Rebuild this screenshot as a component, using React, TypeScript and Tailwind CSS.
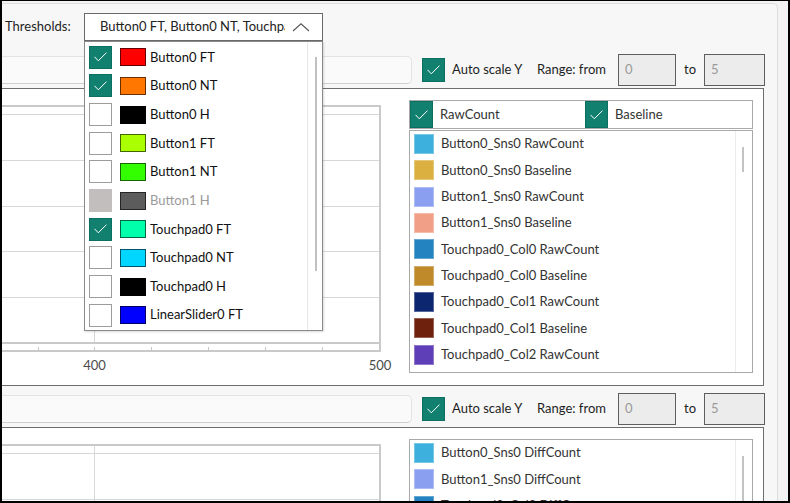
import React from 'react';

type Threshold = { label: string; color: string; checked?: boolean; disabled?: boolean };

const thresholds: Threshold[] = [
  { label: 'Button0 FT', color: '#ff0000', checked: true },
  { label: 'Button0 NT', color: '#ff7700', checked: true },
  { label: 'Button0 H', color: '#000000' },
  { label: 'Button1 FT', color: '#aaff00' },
  { label: 'Button1 NT', color: '#33ff00' },
  { label: 'Button1 H', color: '#5c5c5c', disabled: true },
  { label: 'Touchpad0 FT', color: '#00ffaa', checked: true },
  { label: 'Touchpad0 NT', color: '#00d6ff' },
  { label: 'Touchpad0 H', color: '#000000' },
  { label: 'LinearSlider0 FT', color: '#0000ff' },
];

const rawSeries = [
  { label: 'Button0_Sns0 RawCount', color: '#3db0dd' },
  { label: 'Button0_Sns0 Baseline', color: '#dcb040' },
  { label: 'Button1_Sns0 RawCount', color: '#8a9ff0' },
  { label: 'Button1_Sns0 Baseline', color: '#f29f88' },
  { label: 'Touchpad0_Col0 RawCount', color: '#2382c0' },
  { label: 'Touchpad0_Col0 Baseline', color: '#be8a2a' },
  { label: 'Touchpad0_Col1 RawCount', color: '#0d2670' },
  { label: 'Touchpad0_Col1 Baseline', color: '#6e220e' },
  { label: 'Touchpad0_Col2 RawCount', color: '#5e3fb8' },
];

const diffSeries = [
  { label: 'Button0_Sns0 DiffCount', color: '#3db0dd' },
  { label: 'Button1_Sns0 DiffCount', color: '#8a9ff0' },
  { label: 'Touchpad0_Col0 DiffCount', color: '#2382c0' },
  { label: 'Touchpad0_Col1 DiffCount', color: '#0d2670' },
  { label: 'Touchpad0_Col2 DiffCount', color: '#5e3fb8' },
];

function CheckBox({ checked, disabled, className = '' }: { checked?: boolean; disabled?: boolean; className?: string }) {
  if (disabled) return <span className={`block shrink-0 bg-[#c2bebe] ${className}`} />;
  if (!checked) return <span className={`block shrink-0 border border-[#9c9c9c] bg-white ${className}`} />;
  return (
    <span className={`flex shrink-0 items-center justify-center border border-[#0d6f61] bg-[#11806f] ${className}`}>
      <svg width="13" height="10" viewBox="0 0 13 10">
        <path d="M0.5 4.8 L4.3 8.8 L12.5 0.6" stroke="#ffffff" strokeWidth="1" fill="none" />
      </svg>
    </span>
  );
}

function Toolbar() {
  return (
    <div className="flex h-[32px] shrink-0 items-center pr-[12px]">
      <div className="-ml-[10px] h-[28px] flex-1 rounded-[5px] border border-[#e3e3e3] border-b-[#cfcfcf] bg-[#fafafa]" />
      <CheckBox checked className="ml-[10px] h-[24px] w-[23px]" />
      <span className="ml-[7px] w-[85px] shrink-0">Auto scale Y</span>
      <span className="w-[81px] shrink-0">Range: from</span>
      <div className="flex h-[32px] w-[58px] shrink-0 items-center border border-[#5e5e5e] bg-[#ececec] pl-[6px] text-[#9a9a9a]">0</div>
      <span className="w-[28px] shrink-0 pl-[8px]">to</span>
      <div className="flex h-[32px] w-[61px] shrink-0 items-center border border-[#5e5e5e] bg-[#ececec] pl-[6px] text-[#9a9a9a]">5</div>
    </div>
  );
}

// x in page pixels, y relative to the group's inner top
function Chart({ labels = true }: { labels?: boolean }) {
  const hGrid = [25.5, 71.5, 117.5, 162.5, 208.5];
  const ticks = [38.5, 94.5, 151.5, 208.5, 265.5, 322.5];
  return (
    <svg width="400" height="296" viewBox="-6 0 400 296" className="block shrink-0">
      {hGrid.map((y) => (
        <line key={y} x1={-6} x2={379} y1={y} y2={y} stroke="#d8d8d8" />
      ))}
      <line x1={94.5} x2={94.5} y1={18} y2={253} stroke="#d8d8d8" />
      <rect x={-6} y={16} width={387} height={2} fill="#c9c9c9" />
      <rect x={379} y={16} width={2} height={247} fill="#c9c9c9" />
      <rect x={-6} y={253} width={387} height={2} fill="#c9c9c9" />
      <rect x={-6} y={261} width={387} height={2} fill="#c9c9c9" />
      {ticks.map((x) => (
        <line key={x} x1={x} x2={x} y1={258} y2={261} stroke="#c4c4c4" />
      ))}
      {labels && (
        <>
          <text x={94.5} y={281} textAnchor="middle" fontSize="13" fill="#4a4a4a" fontFamily="Lato, sans-serif">400</text>
          <text x={380} y={281} textAnchor="middle" fontSize="13" fill="#4a4a4a" fontFamily="Lato, sans-serif">500</text>
        </>
      )}
    </svg>
  );
}

function SeriesList({ items, height, thumb }: { items: { label: string; color: string }[]; height: string; thumb: string }) {
  return (
    <div className={`flex border border-[#a9a9a9] bg-white ${height}`}>
      <div className="flex-1 overflow-hidden">
        {items.map((s) => (
          <div key={s.label} className="flex h-[26.33px] items-center pl-[4px] text-[#333333]">
            <span className="block h-[20px] w-[20px] shrink-0 ring-1 ring-inset ring-white/30" style={{ backgroundColor: s.color }} />
            <span className="ml-[7px] whitespace-nowrap">{s.label}</span>
          </div>
        ))}
      </div>
      <div className="w-[17px] shrink-0 border-l border-[#ececec]">
        <div className={`ml-[6px] mt-[16px] w-[2px] bg-[#c3c3c3] ${thumb}`} />
      </div>
    </div>
  );
}

function App() {
  return (
    <div className="relative flex h-[503px] w-[790px] overflow-hidden border-b-2 border-l-2 border-r-2 border-t border-black bg-[#f3f3f3] font-['Lato',sans-serif] text-[13px] text-[#1e1e1e]">
      <div className="mt-[2px] flex w-[776px] shrink-0 flex-col rounded-tr-[5px] border-r border-t border-[#dedede] bg-[#f7f7f7]">
        {/* Thresholds header */}
        <div className="flex h-[50px] shrink-0 items-start pl-[3px] pt-[9px]">
          <span className="flex h-[28px] w-[79px] shrink-0 items-center">Thresholds:</span>
          <div className="relative z-20">
            <div className="flex h-[28px] w-[239px] items-center border border-[#6a6a6a] bg-white pl-[15px]">
              <span className="w-[185px] overflow-hidden whitespace-nowrap text-[#222222]">Button0 FT, Button0 NT, Touchpad0 FT</span>
              <svg width="18" height="9" viewBox="0 0 18 9" className="ml-[7px]">
                <path d="M1 8 L9 0.8 L17 8" stroke="#555555" strokeWidth="1.1" fill="none" />
              </svg>
            </div>
            {/* open dropdown list */}
            <div className="absolute left-0 top-full flex h-[290px] w-[239px] border border-[#8a8a8a] bg-white shadow-[1px_1px_2px_rgba(0,0,0,0.15)]">
              <div className="flex-1 pt-[1px]">
                {thresholds.map((t) => (
                  <div key={t.label} className="flex h-[28.67px] items-center pl-[4px]">
                    <CheckBox checked={t.checked} disabled={t.disabled} className="h-[23px] w-[23px]" />
                    <span className="ml-[8px] block h-[18px] w-[26px] shrink-0 border border-black/60" style={{ backgroundColor: t.color }} />
                    <span className={`ml-[4px] whitespace-nowrap ${t.disabled ? 'text-[#9a9a9a]' : 'text-[#111111]'}`}>{t.label}</span>
                  </div>
                ))}
              </div>
              <div className="flex w-[15px] shrink-0 justify-end border-l border-[#e6e6e6] pr-[5px]">
                <div className="mt-[15px] h-[214px] w-[2px] bg-[#c0c0c0]" />
              </div>
            </div>
          </div>
        </div>

        {/* RawCount / Baseline graph */}
        <Toolbar />
        <div className="-ml-[10px] mr-[13px] mt-[2px] flex h-[298px] shrink-0 border border-[#6e6e6e] bg-white">
          <div className="flex min-w-0 flex-1 justify-end overflow-hidden">
            <Chart />
          </div>
          <div className="ml-[15px] mr-[10px] w-[344px] shrink-0 pt-[11px]">
            <div className="flex h-[29px] border border-[#a9a9a9] bg-white text-[#333333]">
              <div className="flex w-[175px] items-center">
                <CheckBox checked className="h-full w-[23px]" />
                <span className="ml-[7px]">RawCount</span>
              </div>
              <div className="flex items-center">
                <CheckBox checked className="h-full w-[23px]" />
                <span className="ml-[7px]">Baseline</span>
              </div>
            </div>
            <div className="mt-[1px]">
              <SeriesList items={rawSeries} height="h-[243px]" thumb="h-[25px]" />
            </div>
          </div>
        </div>

        {/* DiffCount graph */}
        <div className="mt-[7px]">
          <Toolbar />
        </div>
        <div className="-ml-[10px] mr-[13px] mt-[2px] flex h-[200px] shrink-0 border border-[#6e6e6e] bg-white">
          <div className="flex min-w-0 flex-1 justify-end overflow-hidden">
            <Chart labels={false} />
          </div>
          <div className="ml-[15px] mr-[10px] w-[344px] shrink-0 pt-[11px]">
            <SeriesList items={diffSeries} height="h-[243px]" thumb="h-[60px]" />
          </div>
        </div>
      </div>
      <div className="flex-1" />
    </div>
  );
}

export default App;
